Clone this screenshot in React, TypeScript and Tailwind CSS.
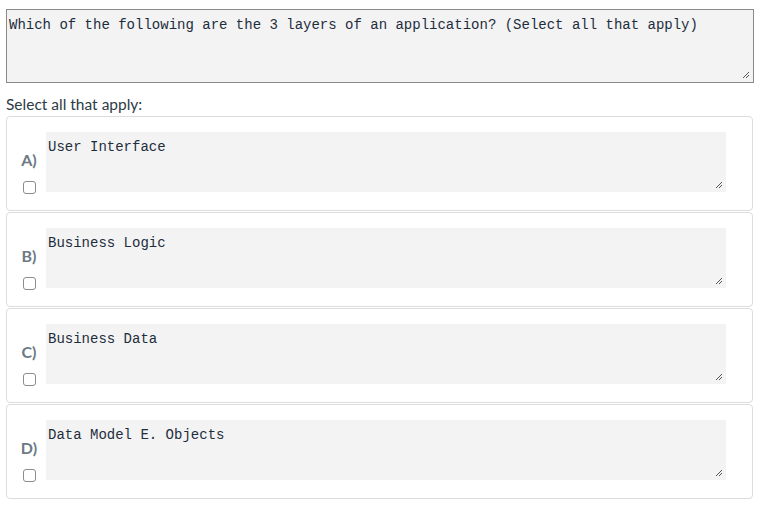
import React from 'react';

const answers = [
  { letter: 'A', text: 'User Interface' },
  { letter: 'B', text: 'Business Logic' },
  { letter: 'C', text: 'Business Data' },
  { letter: 'D', text: 'Data Model E. Objects' },
];

const mono = "font-['Liberation_Mono','Courier_New',monospace]";
const sans = "font-['Lato','Noto_Sans',sans-serif]";

const Grip: React.FC = () => (
  <svg width="8" height="8" viewBox="0 0 8 8" className="absolute bottom-[3px] right-[3px]">
    <path d="M7 1 L1 7 M7 4 L4 7" stroke="#555" strokeWidth="1" fill="none" />
  </svg>
);

export default function App() {
  return (
    <div className={`w-[762px] h-[511px] bg-white px-[6px] pt-[9px] ${sans}`}>
      {/* Question */}
      <div className="relative h-[74px] w-[748px] border border-[#8a8a8a] bg-[#f3f3f3] px-[2px] pt-[6px]">
        <p className={`${mono} text-[14px] leading-[18px] text-[#1e2d3d] whitespace-pre`}>
          Which of the following are the 3 layers of an application? (Select all that apply)
        </p>
        <Grip />
      </div>

      <p className="mt-[11px] text-[15.5px] leading-[20px] text-[#2d3b45]">Select all that apply:</p>

      {/* Answers */}
      <div className="mt-[2px] flex w-[747px] flex-col gap-px">
        {answers.map((a) => (
          <div
            key={a.letter}
            className="flex h-[95px] rounded-[4px] border border-[#dcdcdc] bg-white"
          >
            <div className="flex w-[38px] flex-col items-center pl-[6px] pt-[34px]">
              <span className="text-[16px] font-bold leading-[18px] text-[#6b7a85]">{a.letter})</span>
              <span className="mt-[12px] block h-[13px] w-[13px] rounded-[3px] border border-[#8c8c8c] bg-white" />
            </div>
            <div className="relative ml-px mt-[15px] h-[60px] w-[680px] bg-[#f3f3f3] px-[2px] pt-[6px]">
              <p className={`${mono} text-[14px] leading-[18px] text-[#1e2d3d]`}>{a.text}</p>
              <Grip />
            </div>
          </div>
        ))}
      </div>
    </div>
  );
}
